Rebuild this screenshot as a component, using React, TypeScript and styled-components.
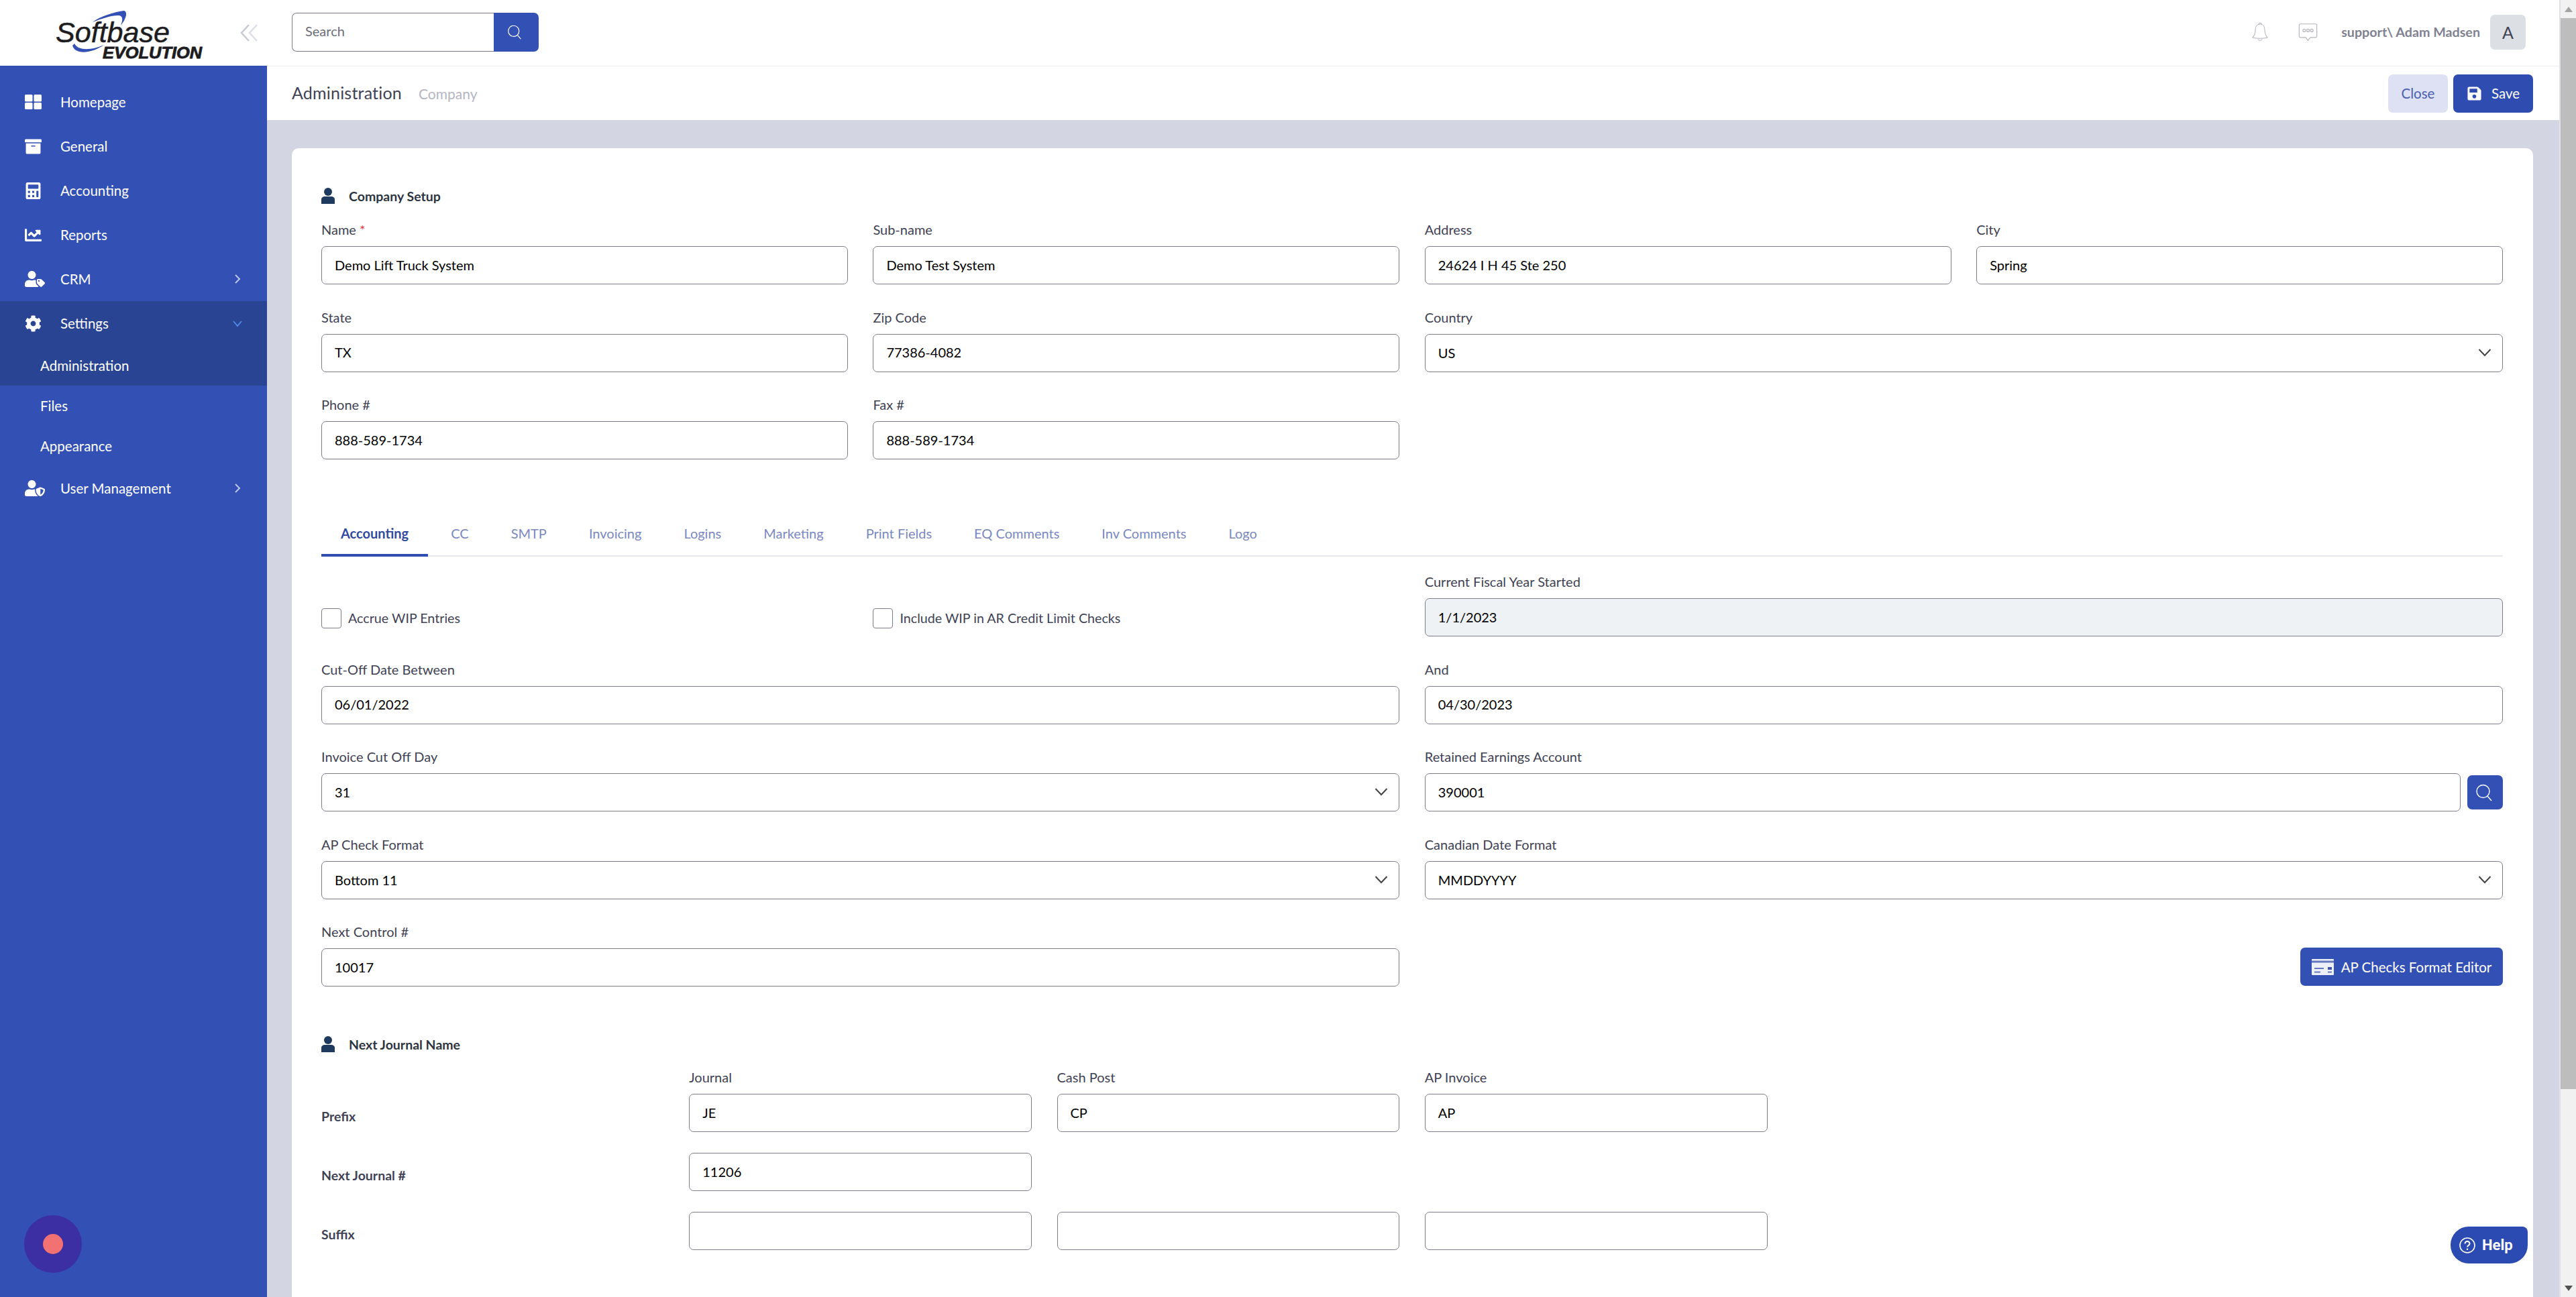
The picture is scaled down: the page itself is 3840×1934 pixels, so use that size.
import React from "react";
import styled, { createGlobalStyle } from "styled-components";
import { FaArchive, FaCalculator, FaChartLine, FaUserTag, FaCog, FaUserShield, FaSave } from "react-icons/fa";

const BLUE = "#3350b5";
const FONT = `Lato, "Noto Sans", sans-serif`;

const Global = createGlobalStyle`
  html, body { margin: 0; padding: 0; height: 100%; overflow: hidden; background: #fff; }
  #root { height: 100%; }
  * { box-sizing: border-box; }
  body { font-family: ${FONT}; }
`;

const Shell = styled.div`display: flex; height: 1934px; width: 3840px; overflow: hidden; position: relative;`;

const Sidebar = styled.aside`width: 398px; flex: none; background: ${BLUE}; display: flex; flex-direction: column; position: relative;`;
const Brand = styled.div`height: 98px; background: #fff; display: flex; align-items: center; position: relative;`;
const Collapse = styled.div`position: absolute; left: 357px; top: 34px; display: flex;`;
const Menu = styled.nav`display: flex; flex-direction: column; padding-top: 21px;`;
const Item = styled.div<{ $active?: boolean }>`
  height: 66px; display: flex; align-items: center; padding-left: 37px; padding-right: 35px; color: #fff;
  font-size: 20.5px; background: ${p => (p.$active ? "#2a4494" : "transparent")};
`;
const ItemIcon = styled.span`width: 53px; flex: none; display: flex; align-items: center;`;
const ItemLabel = styled.span`flex: 1; padding-bottom: 1px;`;
const Sub = styled.div<{ $active?: boolean }>`
  height: 60px; display: flex; align-items: center; padding: 0 0 1px 60px; color: #fff; font-size: 20.5px;
  background: ${p => (p.$active ? "#2a4494" : "transparent")};
`;
const Record = styled.div`position: absolute; left: 36px; top: 1812px; width: 86px; height: 86px; border-radius: 50%; background: #3b2fa3; display: flex; align-items: center; justify-content: center;`;
const RecordDot = styled.div`width: 30px; height: 30px; border-radius: 50%; background: #f27173;`;

const Main = styled.main`flex: 1; min-width: 0; display: flex; flex-direction: column; background: #d4d5e2; overflow: hidden;`;
const Topbar = styled.header`height: 99px; flex: none; background: #fff; border-bottom: 1px solid #ebedf3; display: flex; align-items: center; padding: 0 50px 3px 37px;`;
const SearchBox = styled.div`display: flex; width: 368px; height: 58px;`;
const SearchInput = styled.div`flex: 1; border: 1.5px solid #7e7e86; border-right: 0; border-radius: 7px 0 0 7px; display: flex; align-items: center; padding: 0 0 3px 19px; color: #6d6d78; font-size: 20px;`;
const SearchBtn = styled.div`width: 67px; background: ${BLUE}; border-radius: 0 7px 7px 0; display: flex; align-items: center; justify-content: center; padding-right: 5px;`;
const Spacer = styled.div`flex: 1;`;
const TopIcon = styled.span<{ $mr: number }>`display: flex; margin-right: ${p => p.$mr}px;`;
const UserName = styled.span`font-size: 19.7px; font-weight: 700; color: #7f8091; margin-right: 15px;`;
const Avatar = styled.div`width: 53px; height: 52px; background: #dcdfe4; border-radius: 7px; display: flex; align-items: center; justify-content: center; color: #3f4254; font-size: 25px;`;

const PageHead = styled.div`height: 80px; flex: none; background: #fff; display: flex; align-items: center; padding: 0 39px 0 37px;`;
const PageTitle = styled.h1`margin: 0 0 2px; font-size: 25px; font-weight: 400; color: #3f4254; letter-spacing: .2px;`;
const Crumb = styled.span`margin-left: 25px; font-size: 21px; color: #b5b5c3;`;
const CloseBtn = styled.button`width: 89px; height: 57px; border: 0; border-radius: 7px; background: #dde1f3; color: #4a5fb0; font: 400 20.5px ${FONT};`;
const SaveBtn = styled.button`width: 119px; height: 57px; margin-left: 8px; border: 0; border-radius: 7px; background: #2f4cb0; color: #fff; font: 400 20.5px ${FONT}; display: flex; align-items: center; justify-content: center; gap: 14px;`;

const Content = styled.div`flex: 1; padding: 42px 39px 0 37px; min-height: 0;`;
const Card = styled.section`background: #fff; border-radius: 10px 10px 0 0; padding: 56px 45px 60px 44px; min-height: 1800px;`;
const SectionTitle = styled.div`height: 30px; display: flex; align-items: center; gap: 21px; font-size: 19.5px; font-weight: 700; color: #2c3440;`;
const FourGrid = styled.div`display: grid; grid-template-columns: repeat(4, 1fr); column-gap: 37.5px; row-gap: 37.5px;`;
const TopGrid = styled(FourGrid)`margin-top: 24px;`;
const Field = styled.div<{ $span?: number }>`display: flex; flex-direction: column; min-width: 0; grid-column: span ${p => p.$span || 1};`;
const Label = styled.label`height: 24px; line-height: 22px; margin-bottom: 12px; font-size: 20px; color: #3f4254;`;
const Req = styled.span`color: #d9363e;`;
const Box = styled.div<{ $disabled?: boolean }>`
  height: 57px; border: 1.5px solid #7e7e86; border-radius: 7px; display: flex; align-items: center; padding: 0 19px 2px;
  font-size: 20px; color: #000; background: ${p => (p.$disabled ? "#eff2f5" : "#fff")}; min-width: 0;
`;
const SelectBox = styled(Box)`justify-content: space-between; padding: 0 16px 1px 19px;`;
const InlineRow = styled.div`display: flex; align-items: center; gap: 10px; ${Box} { flex: 1; }`;
const IconBtn = styled.div`width: 53px; height: 51px; flex: none; background: ${BLUE}; border-radius: 7px; display: flex; align-items: center; justify-content: center; padding-right: 4px;`;
const Tabs = styled.div`margin-top: 81px; display: flex; gap: 5px; height: 64px; border-bottom: 2px solid #e8e9ef;`;
const Tab = styled.div<{ $active?: boolean }>`
  height: 64px; padding: 0 29px 2px; display: flex; align-items: center; font-size: 20px; white-space: nowrap;
  font-weight: ${p => (p.$active ? 700 : 400)}; color: ${p => (p.$active ? "#2f4a9f" : "#7a88c2")};
  border-bottom: 4px solid ${p => (p.$active ? "#2f4cb0" : "transparent")};
`;
const AcctGrid = styled(FourGrid)`margin-top: 26px;`;
const CheckCell = styled.div`display: flex; align-items: center; gap: 10px; padding-top: 38px; font-size: 19.7px; color: #3f4254;`;
const Check = styled.div`width: 30px; height: 30px; border: 1.5px solid #7e7e86; border-radius: 4px; flex: none;`;
const ActionCell = styled.div`grid-column: span 2; display: flex; justify-content: flex-end; padding-top: 35px;`;
const ActionBtn = styled.div`width: 302px; height: 57px; background: ${BLUE}; border-radius: 7px; color: #fff; font-size: 20.5px; display: flex; align-items: center; justify-content: center; gap: 11px;`;
const JournalTitle = styled(SectionTitle)`margin-top: 71px;`;
const JournalGrid = styled.div`display: grid; grid-template-columns: repeat(6, 1fr); column-gap: 37.5px; row-gap: 31px; margin-top: 23px;`;
const RowLabel = styled.div`font-size: 19.5px; font-weight: 700; color: #3f4254; align-self: end; height: 57px; display: flex; align-items: center; padding-top: 10px;`;
const Blank = styled.div``;

const Help = styled.div`position: absolute; left: 3653px; top: 1829px; width: 115px; height: 55px; background: #2b4bb2; border-radius: 27px 8px 27px 27px; display: flex; align-items: center; padding-left: 13px; gap: 10px; color: #fff; font: 700 22px Roboto, sans-serif;`;

const Scroll = styled.div`width: 25px; flex: none; background: #f1f1f1; border-left: 2px solid #e0e0e6; display: flex; flex-direction: column; align-items: center;`;
const Arrow = styled.div`height: 27px; flex: none; display: flex; align-items: center; justify-content: center;`;
const Thumb = styled.div`width: 23px; height: 1597px; background: #bdbdbd; flex: none;`;

const SearchIcon = ({ size = 26 }: { size?: number }) => (
  <svg width={size} height={size} viewBox="0 0 26 26" fill="none" stroke="#fff" strokeWidth="1.4">
    <ellipse cx="11.5" cy="11" rx="9.5" ry="9.5" /><path d="M18 18l6 7" />
  </svg>
);
const Chev = ({ down, color = "#c5cdea" }: { down?: boolean; color?: string }) => (
  <svg width="18" height="18" viewBox="0 0 18 18" fill="none" stroke={color} strokeWidth="1.8">
    <path d={down ? "M3 6l6 7 6-7" : "M6 3l6 6-6 6"} />
  </svg>
);
const SelectChev = () => (
  <svg width="20" height="14" viewBox="0 0 20 14" fill="none" stroke="#444" strokeWidth="2"><path d="M1.5 2l8.5 9 8.5-9" /></svg>
);
const Person = () => (
  <svg width="20" height="24" viewBox="0 0 20 24" fill="#1f3a5f">
    <circle cx="10" cy="6" r="6" /><path d="M0 24v-6.5C0 14.5 2.5 13 5 13h10c2.500 0 5 1.500 5 4.500V24z" />
  </svg>
);
const GridIcon = () => (
  <svg width="25" height="22" viewBox="0 0 25 22" fill="#fff">
    <rect x="0" y="0" width="11.500" height="10.500" rx="1.500" /><rect x="13.500" y="0" width="11.500" height="10.500" rx="1.500" />
    <rect x="0" y="12" width="11.500" height="10" rx="1.500" /><rect x="13.500" y="12" width="11.500" height="10" rx="1.500" />
  </svg>
);
const CheckCard = () => (
  <svg width="33" height="24" viewBox="0 0 33 24">
    <rect x="0" y="0" width="33" height="24" rx="1" fill="#eef0f8" />
    <rect x="0" y="2.500" width="33" height="3" fill="#6577c0" />
    <rect x="4" y="13" width="14" height="2" fill="#6577c0" /><rect x="24" y="12" width="6" height="4" fill="#3f56ab" />
    <rect x="4" y="18.500" width="9" height="2" fill="#6577c0" /><rect x="24" y="18.500" width="6" height="2" fill="#6577c0" />
  </svg>
);
const Logo = () => (
  <svg width="398" height="98" viewBox="0 0 398 98">
    <path d="M138 33C150 24 170 18 184 16c6 0 6 10-4 22 3-8 4-14-3-15-12 0-26 5-39 10z" fill="#3350b5" />
    <path d="M108 68c4 14 28 12 47-1-16 7-38 10-44-2z" fill="#3350b5" />
    <text x="83" y="63" fontFamily="Liberation Sans, sans-serif" fontStyle="italic" fontSize="42" textLength="170" lengthAdjust="spacingAndGlyphs" stroke="#1d1d1f" strokeWidth=".5" fill="#1d1d1f">Softbase</text>
    <text x="153" y="87" fontFamily="Liberation Sans, sans-serif" fontStyle="italic" fontWeight="700" fontSize="23.5" textLength="148" lengthAdjust="spacingAndGlyphs" stroke="#1d1d1f" strokeWidth=".8" fill="#1d1d1f">EVOLUTION</text>
  </svg>
);

const cols4Top = [
  [["Name", "Demo Lift Truck System", true], ["Sub-name", "Demo Test System"], ["Address", "24624 I H 45 Ste 250"], ["City", "Spring"]],
  [["State", "TX"], ["Zip Code", "77386-4082"]],
  [["Phone #", "888-589-1734"], ["Fax #", "888-589-1734"]],
] as [string, string, boolean?][][];

const tabs = ["Accounting", "CC", "SMTP", "Invoicing", "Logins", "Marketing", "Print Fields", "EQ Comments", "Inv Comments", "Logo"];

const TextField = ({ label, value, span, req, disabled }: { label: string; value: string; span?: number; req?: boolean; disabled?: boolean }) => (
  <Field $span={span}>
    <Label>{label}{req && <Req> *</Req>}</Label>
    <Box $disabled={disabled}>{value}</Box>
  </Field>
);
const SelectField = ({ label, value, span }: { label: string; value: string; span?: number }) => (
  <Field $span={span}>
    <Label>{label}</Label>
    <SelectBox>{value}<SelectChev /></SelectBox>
  </Field>
);

export default function App() {
  return (
    <Shell>
      <Global />
      <Sidebar>
        <Brand>
          <Logo />
          <Collapse>
            <svg width="28" height="30" viewBox="0 0 28 30" fill="none" stroke="#c6c9d2" strokeWidth="2.5"><path d="M14 3L3 15l11 12" /><path d="M26 3L15 15l11 12" stroke="#dcdfe5" /></svg>
          </Collapse>
        </Brand>
        <Menu>
          <Item><ItemIcon><GridIcon /></ItemIcon><ItemLabel>Homepage</ItemLabel></Item>
          <Item><ItemIcon><FaArchive size={25} color="#fff" /></ItemIcon><ItemLabel>General</ItemLabel></Item>
          <Item><ItemIcon><FaCalculator size={25} color="#fff" /></ItemIcon><ItemLabel>Accounting</ItemLabel></Item>
          <Item><ItemIcon><FaChartLine size={25} color="#fff" /></ItemIcon><ItemLabel>Reports</ItemLabel></Item>
          <Item><ItemIcon><FaUserTag size={30} color="#fff" /></ItemIcon><ItemLabel>CRM</ItemLabel><Chev /></Item>
          <Item $active><ItemIcon><FaCog size={25} color="#fff" /></ItemIcon><ItemLabel>Settings</ItemLabel><Chev down color="#4f8df0" /></Item>
          <Sub $active>Administration</Sub>
          <Sub>Files</Sub>
          <Sub>Appearance</Sub>
          <Item><ItemIcon><FaUserShield size={30} color="#fff" /></ItemIcon><ItemLabel>User Management</ItemLabel><Chev /></Item>
        </Menu>
        <Record><RecordDot /></Record>
      </Sidebar>
      <Main>
        <Topbar>
          <SearchBox><SearchInput>Search</SearchInput><SearchBtn><SearchIcon size={22} /></SearchBtn></SearchBox>
          <Spacer />
          <TopIcon $mr={44}>
            <svg width="26" height="30" viewBox="0 0 28 34" fill="none" stroke="#b4b4bc" strokeWidth="1.200"><path d="M14 3.500c-5 0-8 4-8 10 0 6-1.500 9-4.500 12.500 7 2 18 2 25 0-3-3.500-4.500-6.500-4.500-12.500 0-6-3-10-8-10z" /><path d="M11.500 4a2.500 2.500 0 0 1 5 0M10.500 29c1 2.500 6 2.500 7 0" /></svg>
          </TopIcon>
          <TopIcon $mr={35}>
            <svg width="29" height="28" viewBox="0 0 32 32" fill="none" stroke="#b4b4bc" strokeWidth="1.300"><path d="M3 2h26a2 2 0 0 1 2 2v19a2 2 0 0 1-2 2h-9l-4 5-4-5H3a2 2 0 0 1-2-2V4a2 2 0 0 1 2-2z" /><circle cx="9.500" cy="13" r="2.300" /><circle cx="16" cy="13" r="2.300" /><circle cx="22.500" cy="13" r="2.300" /></svg>
          </TopIcon>
          <UserName>support\ Adam Madsen</UserName>
          <Avatar>A</Avatar>
        </Topbar>
        <PageHead>
          <PageTitle>Administration</PageTitle>
          <Crumb>Company</Crumb>
          <Spacer />
          <CloseBtn>Close</CloseBtn>
          <SaveBtn><FaSave size={23} />Save</SaveBtn>
        </PageHead>
        <Content>
          <Card>
            <SectionTitle><Person />Company Setup</SectionTitle>
            <TopGrid>
              {cols4Top[0].map(([l, v, r]) => <TextField key={l} label={l} value={v} req={r} />)}
              {cols4Top[1].map(([l, v]) => <TextField key={l} label={l} value={v} />)}
              <SelectField label="Country" value="US" span={2} />
              {cols4Top[2].map(([l, v]) => <TextField key={l} label={l} value={v} />)}
            </TopGrid>
            <Tabs>
              {tabs.map((t, i) => <Tab key={t} $active={i === 0}>{t}</Tab>)}
            </Tabs>
            <AcctGrid>
              <CheckCell><Check />Accrue WIP Entries</CheckCell>
              <CheckCell><Check />Include WIP in AR Credit Limit Checks</CheckCell>
              <TextField label="Current Fiscal Year Started" value="1/1/2023" span={2} disabled />
              <TextField label="Cut-Off Date Between" value="06/01/2022" span={2} />
              <TextField label="And" value="04/30/2023" span={2} />
              <SelectField label="Invoice Cut Off Day" value="31" span={2} />
              <Field $span={2}>
                <Label>Retained Earnings Account</Label>
                <InlineRow><Box>390001</Box><IconBtn><SearchIcon /></IconBtn></InlineRow>
              </Field>
              <SelectField label="AP Check Format" value="Bottom 11" span={2} />
              <SelectField label="Canadian Date Format" value="MMDDYYYY" span={2} />
              <TextField label="Next Control #" value="10017" span={2} />
              <ActionCell><ActionBtn><CheckCard />AP Checks Format Editor</ActionBtn></ActionCell>
            </AcctGrid>
            <JournalTitle><Person />Next Journal Name</JournalTitle>
            <JournalGrid>
              <RowLabel>Prefix</RowLabel>
              <TextField label="Journal" value="JE" />
              <TextField label="Cash Post" value="CP" />
              <TextField label="AP Invoice" value="AP" />
              <Blank /><Blank />
              <RowLabel>Next Journal #</RowLabel>
              <Box>11206</Box>
              <Blank /><Blank /><Blank /><Blank />
              <RowLabel>Suffix</RowLabel>
              <Box /><Box /><Box />
            </JournalGrid>
          </Card>
        </Content>
      </Main>
      <Scroll>
        <Arrow><svg width="14" height="10" viewBox="0 0 14 10" fill="#a3a3a3"><path d="M7 1l6 8H1z" /></svg></Arrow>
        <Thumb />
        <Spacer />
        <Arrow><svg width="14" height="10" viewBox="0 0 14 10" fill="#505050"><path d="M7 9L1 1h12z" /></svg></Arrow>
      </Scroll>
      <Help>
        <svg width="24" height="24" viewBox="0 0 24 24" fill="none" stroke="#fff" strokeWidth="1.600"><circle cx="12" cy="12" r="11" /><path d="M8.500 9.500a3.500 3.500 0 0 1 7 0c0 2.500-3.500 2.500-3.500 5" strokeWidth="2" /><circle cx="12" cy="17.800" r=".6" strokeWidth="1.400" /></svg>
        Help
      </Help>
    </Shell>
  );
}
